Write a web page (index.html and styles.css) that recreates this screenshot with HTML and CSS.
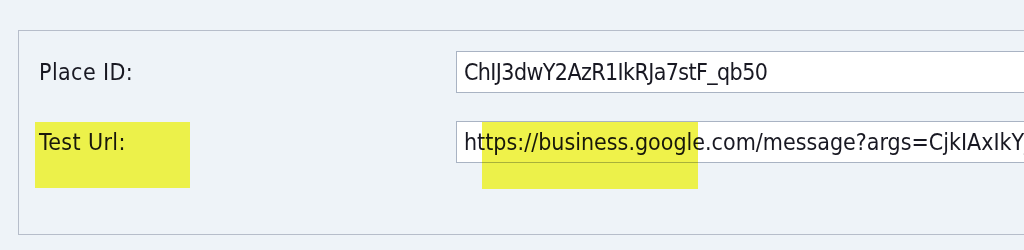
FILE: index.html
```html
<!DOCTYPE html>
<html lang="en">
<head>
<meta charset="utf-8">
<title>Place settings</title>
<link rel="stylesheet" href="styles.css">
</head>
<body>
<div class="page">
  <div class="group">
    <div class="form">
      <div class="label">Place ID:</div>
      <div class="field field-id">ChIJ3dwY2AzR1IkRJa7stF_qb50</div>
      <div class="label">Test Url:</div>
      <div class="field">https://business.google.com/message?args=CjkIAxIkYjVlMTA0NzQtZGRjMy00</div>
    </div>
    <span class="mark mark-label"></span>
    <span class="mark mark-url"></span>
  </div>
</div>
</body>
</html>
```
FILE: styles.css
```css
html, body {
  margin: 0;
  padding: 0;
  background: #eef3f8;
  overflow: hidden;
}
.page {
  width: 1024px;
  height: 250px;
  padding: 30px 0 0 18px;
  box-sizing: border-box;
  overflow: hidden;
  font-family: "DejaVu Sans Condensed", "DejaVu Sans", sans-serif;
  font-stretch: semi-condensed;
  font-size: 23px;
  color: #181822;
}
.group {
  position: relative;
  width: 1100px;
  height: 205px;
  box-sizing: border-box;
  border: 1px solid #b6bdca;
  padding: 20px 0 0 20px;
}
.form {
  display: grid;
  grid-template-columns: 417px 700px;
  row-gap: 28px;
}
.label,
.field {
  height: 42px;
  line-height: 40px;
  box-sizing: border-box;
  padding-top: 1px;
  white-space: nowrap;
}
.label {
  letter-spacing: 0.4px;
}
.field {
  background: #ffffff;
  border: 1px solid #a9b3c3;
  line-height: 38px;
  padding-left: 7px;
  overflow: hidden;
}
.field-id {
  letter-spacing: -0.6px;
}
.mark {
  position: absolute;
  background: #fdfd4c;
  mix-blend-mode: multiply;
}
.mark-label {
  left: 16px;
  top: 91px;
  width: 155px;
  height: 66px;
}
.mark-url {
  left: 463px;
  top: 91px;
  width: 216px;
  height: 67px;
  background: linear-gradient(#eff24a 0, #eff24a 40px, #fdfd4c 40px);
}
```
